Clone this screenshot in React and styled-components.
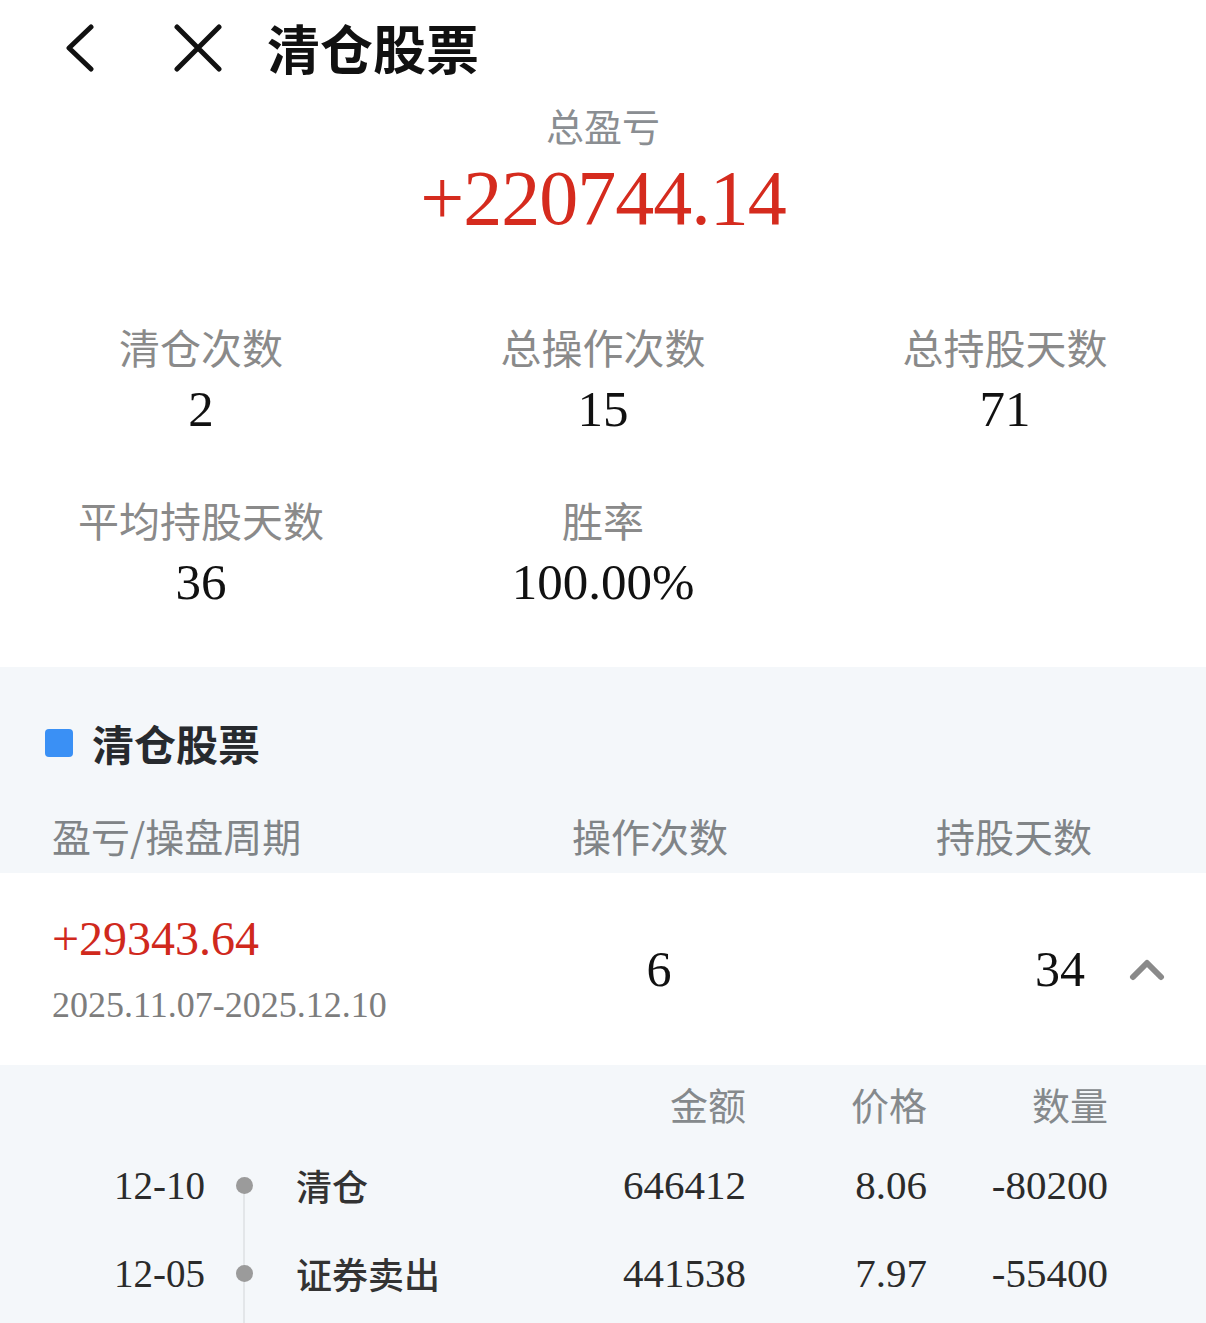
import React from 'react'
import styled, { createGlobalStyle } from 'styled-components'

const GlobalStyle = createGlobalStyle`
  html, body { margin: 0; padding: 0; background: #fff; }
  body { font-family: "Noto Sans CJK SC", "Noto Sans", sans-serif; }
`

const CJK = `"Noto Sans CJK SC", "Noto Sans", sans-serif`
const NUM = `"Liberation Serif", "Noto Sans CJK SC", serif`

const Page = styled.div`
  width: 1206px;
  height: 1323px;
  display: flex;
  flex-direction: column;
  background: #fff;
  overflow: hidden;
`

const TopBar = styled.header`
  height: 95px;
  flex-shrink: 0;
  display: flex;
  align-items: center;
  padding-left: 63px;
`

const IconBtn = styled.button`
  border: 0;
  background: none;
  padding: 0;
  display: flex;
  align-items: center;
  margin-right: ${p => p.$gap}px;
  cursor: pointer;
`

const PageTitle = styled.h1`
  margin: 0;
  font-family: ${CJK};
  font-size: 53px;
  font-weight: 700;
  color: #111;
  line-height: 1;
`

const Summary = styled.section`
  display: flex;
  flex-direction: column;
  align-items: center;
  padding-top: 8px;
`

const SummaryLabel = styled.div`
  font-family: ${CJK};
  font-size: 38px;
  color: #8a8e92;
  line-height: 44px;
`

const BigNumber = styled.div`
  margin-top: 6px;
  font-family: ${NUM};
  font-size: 78px;
  color: #d52b1e;
  line-height: 90px;
  letter-spacing: -1px;
`

const StatsGrid = styled.div`
  display: grid;
  grid-template-columns: repeat(3, 1fr);
  row-gap: 50px;
  padding: 75px 0 53px;
`

const Stat = styled.div`
  display: flex;
  flex-direction: column;
  align-items: center;
`

const StatLabel = styled.div`
  font-family: ${CJK};
  font-size: 41px;
  color: #8a8a8a;
  line-height: 56px;
`

const StatValue = styled.div`
  margin-top: 3px;
  font-family: ${NUM};
  font-size: 51px;
  color: #111;
  line-height: 64px;
`

const GraySection = styled.section`
  background: #f4f7fa;
`

const SectionTitle = styled.div`
  display: flex;
  align-items: center;
  gap: 19px;
  padding: 51px 0 0 45px;
  height: 50px;
`

const BlueMark = styled.span`
  width: 28px;
  height: 28px;
  border-radius: 4px;
  background: #3a90f5;
`

const SectionText = styled.h2`
  margin: 0;
  font-family: ${CJK};
  font-size: 42px;
  font-weight: 700;
  color: #272a2e;
  line-height: 1;
`

const HeadRow = styled.div`
  display: grid;
  grid-template-columns: 456px 284px 300px;
  padding: 28px 0 0 52px;
  height: 77px;
  align-items: center;
`

const HeadCell = styled.div`
  font-family: ${CJK};
  font-size: 39px;
  color: #808487;
  text-align: ${p => p.$align || 'left'};
  white-space: nowrap;
`

const TradeRow = styled.div`
  display: grid;
  grid-template-columns: 456px 302px 275px 80px;
  padding-left: 52px;
  height: 192px;
  flex-shrink: 0;
  align-items: center;
  background: #fff;
`

const PnlCell = styled.div`
  display: flex;
  flex-direction: column;
  gap: 21px;
`

const Pnl = styled.div`
  font-family: ${NUM};
  font-size: 48px;
  color: #d0291d;
  line-height: 50px;
`

const Period = styled.div`
  font-family: ${NUM};
  font-size: 36px;
  color: #7d7d7d;
  line-height: 40px;
  white-space: nowrap;
`

const RowValue = styled.div`
  font-family: ${NUM};
  font-size: 50px;
  color: #111;
  text-align: ${p => p.$align};
`

const Toggle = styled.div`
  justify-self: end;
  display: flex;
  align-items: center;
`

const Detail = styled.div`
  flex: 1;
  background: #f4f7fa;
`

const DetailGrid = styled.div`
  display: grid;
  grid-template-columns: 205px 78px 1fr 190px 181px 181px;
  padding-right: 98px;
  height: ${p => p.$h}px;
  align-items: center;
`

const DetailHead = styled.div`
  font-family: ${CJK};
  font-size: 38px;
  color: #85898c;
  text-align: right;
`

const DateCell = styled.div`
  font-family: ${NUM};
  font-size: 39px;
  color: #2b2b2b;
  text-align: right;
`

const Timeline = styled.div`
  position: relative;
  align-self: stretch;
  display: flex;
  align-items: center;
  justify-content: center;

  &::before {
    content: '';
    position: absolute;
    left: 50%;
    margin-left: -1px;
    width: 2px;
    top: ${p => (p.$first ? '50%' : '0')};
    bottom: ${p => (p.$last ? '-40px' : '0')};
    background: #e3e6e9;
  }
`

const Dot = styled.span`
  position: relative;
  z-index: 1;
  width: 17px;
  height: 17px;
  border-radius: 50%;
  background: #9b9b9b;
`

const ActionName = styled.div`
  font-family: ${CJK};
  font-size: 36px;
  font-weight: 500;
  color: #333;
  padding-left: 13px;
`

const Num = styled.div`
  font-family: ${NUM};
  font-size: 41px;
  color: #2b2b2b;
  text-align: right;
`

const stats = [
  { label: '清仓次数', value: '2' },
  { label: '总操作次数', value: '15' },
  { label: '总持股天数', value: '71' },
  { label: '平均持股天数', value: '36' },
  { label: '胜率', value: '100.00%' },
]

const trades = [
  { date: '12-10', name: '清仓', amount: '646412', price: '8.06', qty: '-80200' },
  { date: '12-05', name: '证券卖出', amount: '441538', price: '7.97', qty: '-55400' },
]

const BackIcon = () => (
  <svg width="34" height="48" viewBox="0 0 34 48">
    <polyline points="28,3 6,24 28,45" fill="none" stroke="#111" strokeWidth="5" strokeLinecap="round" strokeLinejoin="round" />
  </svg>
)

const CloseIcon = () => (
  <svg width="50" height="48" viewBox="0 0 50 48">
    <path d="M4 3 L46 45 M46 3 L4 45" fill="none" stroke="#111" strokeWidth="5" strokeLinecap="round" />
  </svg>
)

const ChevronUp = () => (
  <svg width="36" height="24" viewBox="0 0 36 24">
    <polyline points="4,20 18,6 32,20" fill="none" stroke="#8a8a8a" strokeWidth="6" strokeLinecap="round" strokeLinejoin="round" />
  </svg>
)

export default function App() {
  return (
    <Page>
      <GlobalStyle />
      <TopBar>
        <IconBtn $gap={76}><BackIcon /></IconBtn>
        <IconBtn $gap={44}><CloseIcon /></IconBtn>
        <PageTitle>清仓股票</PageTitle>
      </TopBar>

      <Summary>
        <SummaryLabel>总盈亏</SummaryLabel>
        <BigNumber>+220744.14</BigNumber>
      </Summary>

      <StatsGrid>
        {stats.map(s => (
          <Stat key={s.label}>
            <StatLabel>{s.label}</StatLabel>
            <StatValue>{s.value}</StatValue>
          </Stat>
        ))}
      </StatsGrid>

      <GraySection>
        <SectionTitle>
          <BlueMark />
          <SectionText>清仓股票</SectionText>
        </SectionTitle>
        <HeadRow>
          <HeadCell>盈亏/操盘周期</HeadCell>
          <HeadCell $align="center">操作次数</HeadCell>
          <HeadCell $align="right">持股天数</HeadCell>
        </HeadRow>
      </GraySection>

      <TradeRow>
        <PnlCell>
          <Pnl>+29343.64</Pnl>
          <Period>2025.11.07-2025.12.10</Period>
        </PnlCell>
        <RowValue $align="center">6</RowValue>
        <RowValue $align="right">34</RowValue>
        <Toggle><ChevronUp /></Toggle>
      </TradeRow>

      <Detail>
        <DetailGrid $h={76}>
          <span />
          <span />
          <span />
          <DetailHead>金额</DetailHead>
          <DetailHead>价格</DetailHead>
          <DetailHead>数量</DetailHead>
        </DetailGrid>
        {trades.map((t, i) => (
          <DetailGrid $h={88} key={t.date}>
            <DateCell>{t.date}</DateCell>
            <Timeline $first={i === 0} $last={i === trades.length - 1}><Dot /></Timeline>
            <ActionName>{t.name}</ActionName>
            <Num>{t.amount}</Num>
            <Num>{t.price}</Num>
            <Num>{t.qty}</Num>
          </DetailGrid>
        ))}
      </Detail>
    </Page>
  )
}
